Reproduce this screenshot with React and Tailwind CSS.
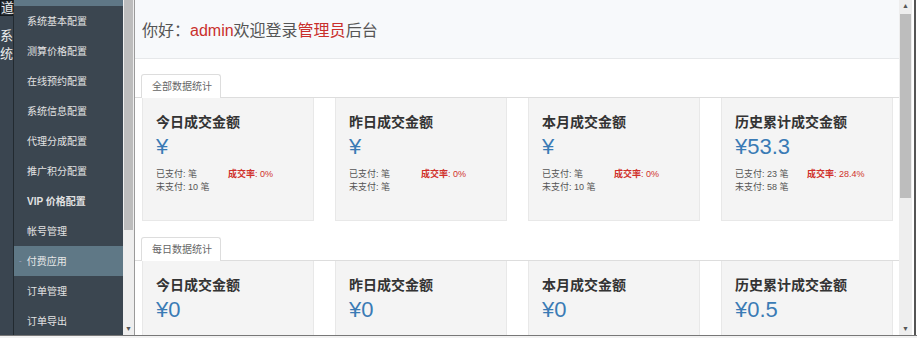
import React from "react";

const font = { fontFamily: '"Liberation Sans", "Noto Sans CJK SC", sans-serif' };

const menu = [
  "系统基本配置",
  "测算价格配置",
  "在线预约配置",
  "系统信息配置",
  "代理分成配置",
  "推广积分配置",
  "VIP 价格配置",
  "帐号管理",
  "付费应用",
  "订单管理",
  "订单导出",
];

const allStats = [
  { title: "今日成交金额", value: "¥", paid: "笔", unpaid: "10 笔", rate: "0%" },
  { title: "昨日成交金额", value: "¥", paid: "笔", unpaid: "笔", rate: "0%" },
  { title: "本月成交金额", value: "¥", paid: "笔", unpaid: "10 笔", rate: "0%" },
  { title: "历史累计成交金额", value: "¥53.3", paid: "23 笔", unpaid: "58 笔", rate: "28.4%" },
];

const dailyStats = [
  { title: "今日成交金额", value: "¥0" },
  { title: "昨日成交金额", value: "¥0" },
  { title: "本月成交金额", value: "¥0" },
  { title: "历史累计成交金额", value: "¥0.5" },
];

function Tab({ label }) {
  return (
    <div className="flex shrink-0 border-b border-[#dddddd] pl-[6px]">
      <div className="-mb-px h-[24px] w-[80px] rounded-t-[3px] border border-b-0 border-[#dddddd] bg-white pl-[10px] text-[10px] leading-[23px] text-[#666]">
        {label}
      </div>
    </div>
  );
}

function Card({ s }) {
  return (
    <div className="h-[123px] w-[172px] shrink-0 border border-t-0 border-[#e8e8e8] bg-[#f4f4f4] pl-[13px] pt-[16px]">
      <div className="text-[14px] font-bold leading-[16px] text-[#333]">{s.title}</div>
      <div className="mt-[2px] text-[22px] leading-[30px] text-[#3a7bb5]">{s.value}</div>
      {s.rate && (
        <div className="mt-[6px] text-[9px] leading-[13px] text-[#555]">
          <div className="flex">
            <span className="w-[72px]">已支付: {s.paid}</span>
            <span className="text-[#d0302a]">
              <b>成交率</b>: {s.rate}
            </span>
          </div>
          <div>未支付: {s.unpaid}</div>
        </div>
      )}
    </div>
  );
}

function Scrollbar({ thumbTop, thumbHeight, width }) {
  return (
    <div className={`relative h-full shrink-0 ${width} bg-[#eeeeee]`}>
      <div className="absolute left-0 right-0 top-0 flex h-[12px] items-center justify-center text-[7px] text-[#555]">▲</div>
      <div
        className="absolute left-[1px] right-[1px] bg-[#bdbdbd]"
        style={{ top: thumbTop, height: thumbHeight }}
      />
      <div className="absolute bottom-0 left-0 right-0 flex h-[12px] items-center justify-center text-[7px] text-[#555]">▼</div>
    </div>
  );
}

export default function App() {
  return (
    <div className="flex h-[338px] w-[917px] flex-col overflow-hidden bg-white" style={font}>
      <div className="flex h-[335px] shrink-0 overflow-hidden">
        <div className="flex w-[14px] shrink-0 flex-col items-center border-r border-[#222a30] bg-[#3a4550] text-[13px] leading-[18px] text-[#eee]">
          <div className="w-full border border-[#151a1e] bg-[#2a3138] text-center leading-[14px]">道</div>
          <div className="mt-[11px]">系</div>
          <div>统</div>
        </div>
        <div className="flex w-[109px] shrink-0 flex-col bg-[#3b4650]">
          <div className="h-[6px] shrink-0 bg-[#5f7786]" />
          {menu.map((m) =>
            m === "付费应用" ? (
              <div key={m} className="flex h-[30px] shrink-0 items-center bg-[#5f7886] pl-[5px] text-[10px] text-[#e8e8e8]">
                <span className="mr-[5px] text-[8px] text-[#aac]">-</span>
                {m}
              </div>
            ) : (
              <div key={m} className={`flex h-[30px] shrink-0 items-center pl-[13px] text-[10px] text-[#e3e3e3] ${m.startsWith("VIP") ? "font-bold" : ""}`}>
                {m}
              </div>
            )
          )}
        </div>
        <div className="shrink-0 border-r border-[#9a9a9a]">
          <Scrollbar thumbTop={0} thumbHeight={230} width="w-[11px]" />
        </div>
        <div className="flex min-w-0 flex-1 flex-col overflow-hidden">
          <div className="flex h-[59px] shrink-0 items-center border-b border-[#e6e8ea] bg-[#f7f9fb] pl-[7px] pt-[4px] text-[16px] text-[#555]">
            你好：<span className="text-[#c9302c]">admin</span>欢迎登录<span className="text-[#c9302c]">管理员</span>后台
          </div>
          <div className="mt-[15px] shrink-0">
            <Tab label="全部数据统计" />
            <div className="flex gap-[21px] pl-[7px]">
              {allStats.map((s) => (
                <Card key={s.title} s={s} />
              ))}
            </div>
          </div>
          <div className="mt-[16px] shrink-0">
            <Tab label="每日数据统计" />
            <div className="flex gap-[21px] pl-[7px]">
              {dailyStats.map((s) => (
                <Card key={s.title} s={s} />
              ))}
            </div>
          </div>
        </div>
        <Scrollbar thumbTop={14} thumbHeight={184} width="w-[13px]" />
        <div className="w-[2px] shrink-0 bg-white" />
        <div className="w-[2px] shrink-0 bg-[#555]" />
        <div className="w-[1px] shrink-0 bg-white" />
      </div>
      <div className="h-[1px] shrink-0 bg-[#777]" />
      <div className="flex-1 bg-[#f2f2f2]" />
    </div>
  );
}
